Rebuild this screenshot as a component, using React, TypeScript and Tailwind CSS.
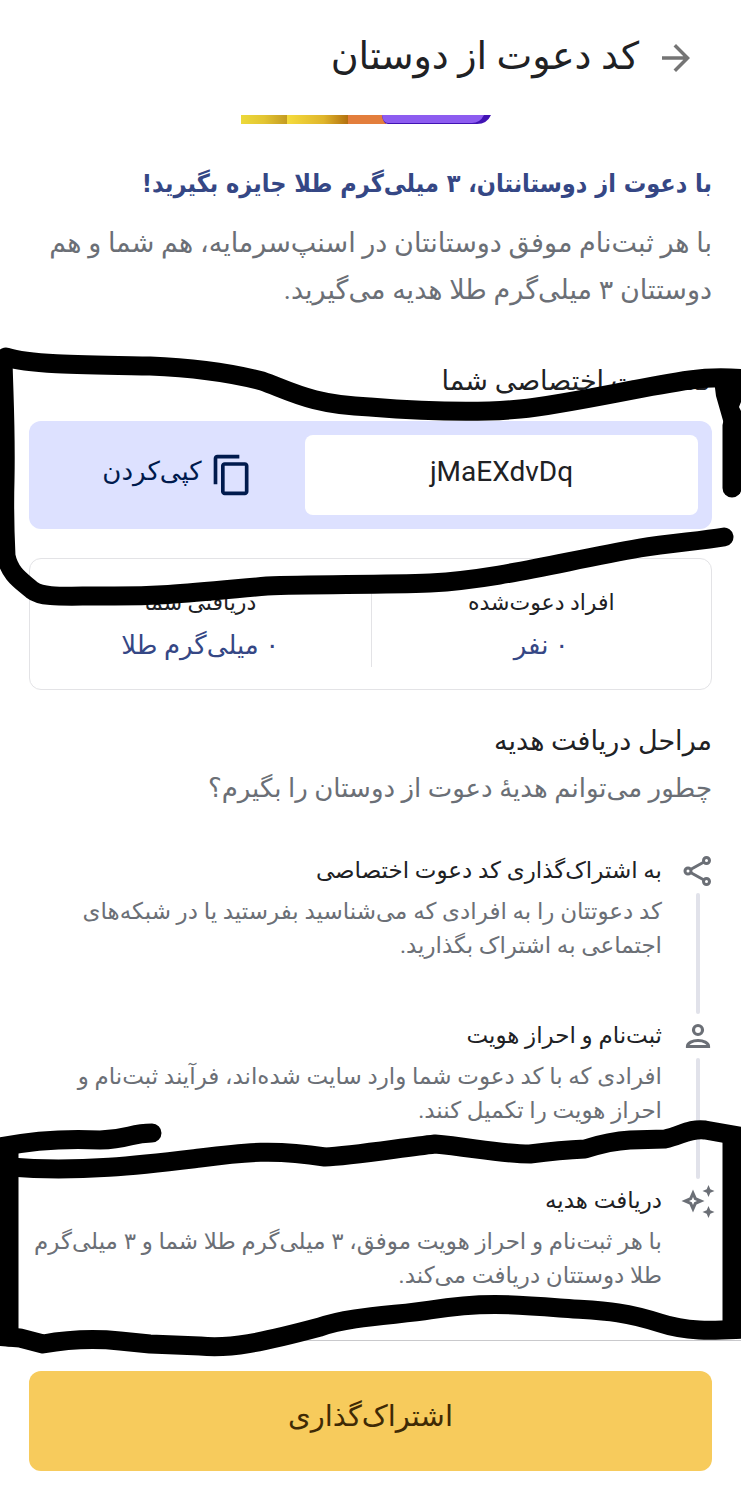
import { useState } from 'react'
import { MdArrowForward, MdContentCopy } from 'react-icons/md'

const INVITE_CODE = 'jMaEXdvDq'

function ShareIcon() {
  return (
    <svg viewBox="0 0 32 32" className="size-8" fill="none" stroke="currentColor" strokeWidth="3">
      <circle cx="6" cy="16" r="3" />
      <circle cx="24.500" cy="5.500" r="3" />
      <circle cx="24.500" cy="26.500" r="3" />
      <path d="M8.500 14.500L22 7M8.500 17.500L22 25" />
    </svg>
  )
}

function PersonIcon() {
  return (
    <svg viewBox="0 0 32 32" className="size-8" fill="none" stroke="currentColor" strokeWidth="3.200">
      <circle cx="16" cy="10" r="4.500" />
      <path d="M5.500 26.500h21c0-3.500-5-6-10.500-6s-10.500 2.500-10.500 6z" />
    </svg>
  )
}

function SparkleIcon() {
  return (
    <svg viewBox="0 0 32 32" className="size-8 overflow-visible fill-current">
      <path
        fillRule="evenodd"
        d="M11 4.500l3.500 8 8 3.500-8 3.500-3.500 8-3.500-8-8-3.500 8-3.500zM11 12l-1.200 2.800-2.800 1.200 2.800 1.200 1.200 2.800 1.200-2.800 2.800-1.200-2.800-1.200z"
      />
      <path d="M26.500 0l1.800 4.200 4.200 1.800-4.200 1.800-1.800 4.200-1.800-4.200-4.200-1.800 4.200-1.800zM26.500 21l1.800 4.200 4.200 1.800-4.200 1.800-1.800 4.200-1.800-4.200-4.200-1.800 4.200-1.800z" />
    </svg>
  )
}

const stats = [
  { label: 'افراد دعوت‌شده', value: '۰ نفر' },
  { label: 'دریافتی شما', value: '۰ میلی‌گرم طلا' },
]

const steps = [
  {
    icon: <ShareIcon />,
    title: 'به اشتراک‌گذاری کد دعوت اختصاصی',
    text: 'کد دعوتتان را به افرادی که می‌شناسید بفرستید یا در شبکه‌های اجتماعی به اشتراک بگذارید.',
  },
  {
    icon: <PersonIcon />,
    title: 'ثبت‌نام و احراز هویت',
    text: 'افرادی که با کد دعوت شما وارد سایت شده‌اند، فرآیند ثبت‌نام و احراز هویت را تکمیل کنند.',
  },
  {
    icon: <SparkleIcon />,
    title: 'دریافت هدیه',
    text: 'با هر ثبت‌نام و احراز هویت موفق، ۳ میلی‌گرم طلا شما و ۳ میلی‌گرم طلا دوستتان دریافت می‌کند.',
  },
]

function BannerEdge() {
  return (
    <svg viewBox="0 0 260 9" className="mx-auto block h-[9px] w-[260px]">
      <defs>
        <linearGradient id="gold">
          <stop offset="0" stopColor="#ecd93a" />
          <stop offset="0.5" stopColor="#e3c532" />
          <stop offset="1" stopColor="#c49b22" />
        </linearGradient>
        <linearGradient id="goldDark">
          <stop offset="0" stopColor="#f5dc3c" />
          <stop offset="0.6" stopColor="#dfb52b" />
          <stop offset="1" stopColor="#b3700f" />
        </linearGradient>
      </defs>
      <path d="M0 0h46v9H0z" fill="url(#gold)" />
      <path d="M46 0h61v9H46z" fill="url(#goldDark)" />
      <path d="M107 0h38v9h-38z" fill="#e37e3c" />
      <path d="M141 0h109q-4 9-14 9h-89q-5 0-6-9z" fill="#4113b4" />
      <path d="M141 0h102q-4 8-12 8h-84q-5 0-6-8z" fill="#8d5cf0" />
    </svg>
  )
}

function MarkerStrokes() {
  return (
    <svg
      viewBox="0 0 741 1500"
      preserveAspectRatio="none"
      className="pointer-events-none absolute inset-0 size-full"
      fill="none"
      stroke="#000"
      strokeWidth="19"
      strokeLinecap="round"
      strokeLinejoin="round"
      aria-hidden="true"
    >
      <path d="M6 357C30 365 90 365 150 366C200 368 235 374 262 381C290 391 312 405 370 407C420 411 480 413 520 409C570 404 640 387 690 380C710 377 725 377 745 379" />
      <path d="M732 425V488" />
      <path d="M714 380L716 396L724 424V430H741V411L739 407L741 402V380Z" fill="#000" stroke="none" />
      <path d="M3 360C4 400 6 430 5 480C4 515 5 535 6 556C10 575 22 581 32 590C42 598 65 596 100 596C160 597 200 592 267 586C310 584 380 585 430 583C500 579 560 562 640 548C670 543 700 541 724 537" />
      <path d="M0 1147C30 1141 60 1138 100 1140C130 1139 130 1133 152 1133" />
      <path d="M9 1150V1337" />
      <path d="M10 1167C80 1173 150 1164 200 1158C245 1152 275 1149 325 1157C350 1156 400 1148 435 1144C470 1147 500 1154 530 1154Q560 1150 585 1149Q610 1141 630 1140L665 1139C680 1136 690 1128 705 1130L745 1137" />
      <path d="M732 1136V1328" />
      <path d="M-5 1336L20 1338L43 1344C60 1341 90 1338 120 1341L150 1344L200 1346C230 1349 260 1343 320 1327C350 1316 400 1315 430 1310C480 1302 510 1304 560 1308C600 1311 620 1310 660 1323C690 1333 720 1330 745 1329" />
    </svg>
  )
}

export default function App() {
  const [copied, setCopied] = useState(false)

  const copyCode = () => {
    navigator.clipboard?.writeText(INVITE_CODE)
    setCopied(true)
  }

  return (
    <div
      dir="rtl"
      className="relative flex min-h-screen flex-col bg-white font-['Roboto','DejaVu_Sans',sans-serif] text-[#202124]"
    >
      <header className="flex h-[115px] items-center gap-4 px-11">
        <button type="button" aria-label="بازگشت" className="text-[#757575]">
          <MdArrowForward size={42} />
        </button>
        <h1 className="pb-1 text-[38px] leading-[48px]">کد دعوت از دوستان</h1>
      </header>

      <main className="flex-1 px-[29px]">
        <BannerEdge />

        <h2 className="mt-9 font-['DejaVu_Sans_Condensed',sans-serif] text-[25px] leading-[48px] font-bold text-[#354785]">
          با دعوت از دوستانتان، ۳ میلی‌گرم طلا جایزه بگیرید!
        </h2>
        <p className="mt-3 text-[27px] leading-[47px] text-[#6b6f76]">
          با هر ثبت‌نام موفق دوستانتان در اسنپ‌سرمایه، هم شما و هم دوستتان ۳ میلی‌گرم طلا هدیه می‌گیرید.
        </p>

        <label htmlFor="code" className="mt-11 block text-[27px] leading-[47px]">
          کد دعوت اختصاصی شما
        </label>
        <div className="mt-4 flex h-[108px] items-center rounded-xl bg-[#dde1ff] p-[14px]">
          <input
            id="code"
            readOnly
            dir="ltr"
            value={INVITE_CODE}
            className="h-20 w-[393px] rounded-lg bg-white pb-2 text-center text-[28px] outline-none"
          />
          <button
            type="button"
            onClick={copyCode}
            aria-pressed={copied}
            className="flex flex-1 items-center justify-center gap-2 pl-2 text-[26px] text-[#001a4d]"
          >
            <MdContentCopy size={44} />
            <span className="pb-2">کپی‌کردن</span>
          </button>
        </div>

        <dl className="mt-[29px] grid h-[132px] grid-cols-2 divide-x divide-[#e3e3e6] rounded-xl border border-[#e3e3e6] py-[22px] text-center">
          {stats.map((stat) => (
            <div key={stat.label}>
              <dt className="text-[22px] leading-[44px]">{stat.label}</dt>
              <dd className="text-[26px] leading-[40px] text-[#354785]">{stat.value}</dd>
            </div>
          ))}
        </dl>

        <h2 className="mt-[27px] text-[27px] leading-[48px]">مراحل دریافت هدیه</h2>
        <p className="text-[26px] leading-[47px] text-[#6b6f76]">چطور می‌توانم هدیهٔ دعوت از دوستان را بگیرم؟</p>

        <ol className="mt-[41px]">
          {steps.map((step, i) => (
            <li key={step.title} className="flex h-[165px] gap-[22px] last:h-[157px]">
              <div className="flex w-7 flex-col items-center text-[#6b6f76]">
                <span className="flex size-9 items-center justify-center">{step.icon}</span>
                {i < steps.length - 1 && <span className="my-1 w-1 flex-1 rounded-full bg-[#e1e2ea]" />}
              </div>
              <div className="flex-1">
                <h3 className="text-[23px] leading-[36px]">{step.title}</h3>
                <p className="mt-1.5 text-[23px] leading-[34px] text-[#6b6f76]">{step.text}</p>
              </div>
            </li>
          ))}
        </ol>
      </main>

      <footer className="border-t border-[#c9c9cc] px-[29px] pt-[30px] pb-[29px]">
        <button type="button" className="h-[100px] w-full rounded-xl bg-[#f7cb5c] pb-2 text-[29px] text-[#3f2a05]">
          اشتراک‌گذاری
        </button>
      </footer>

      <MarkerStrokes />
    </div>
  )
}
